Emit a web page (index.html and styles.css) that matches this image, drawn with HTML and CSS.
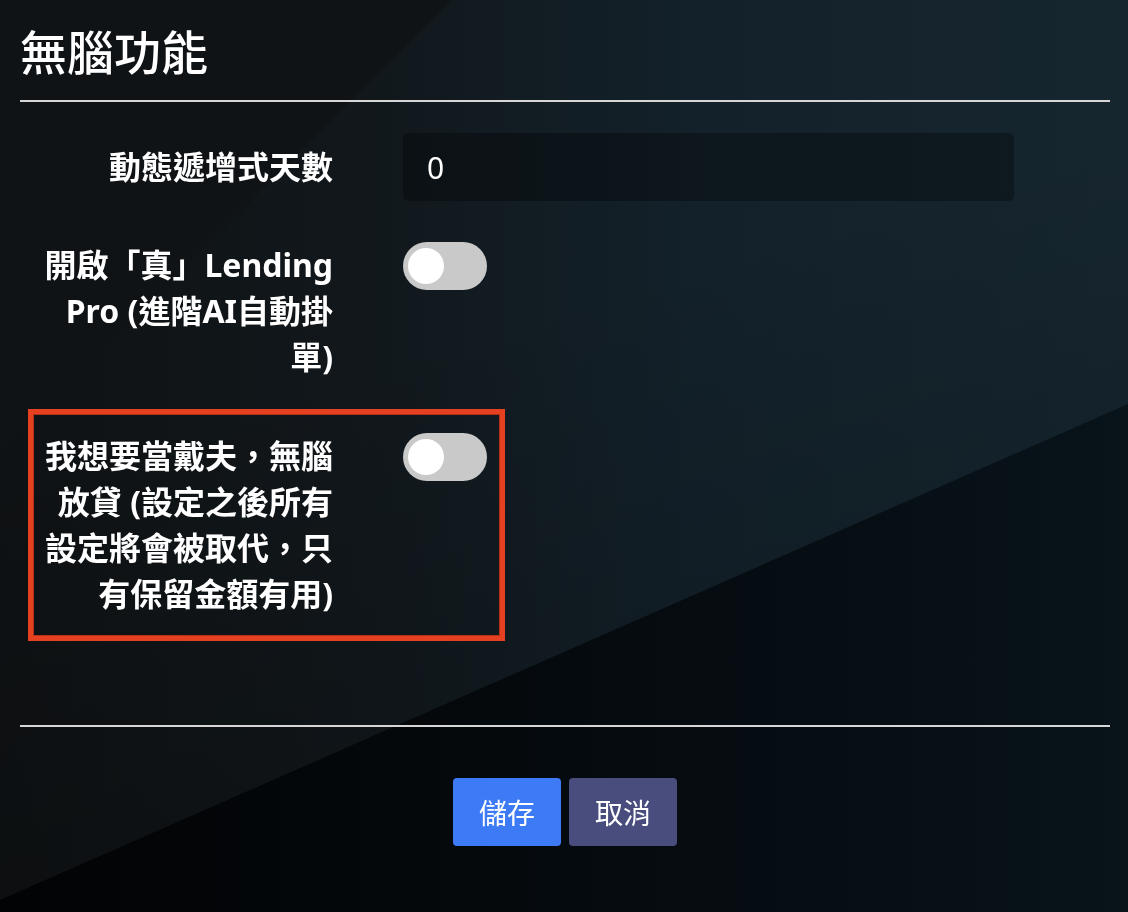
FILE: index.html
```html
<!DOCTYPE html>
<html lang="zh-Hant">
<head>
  <meta charset="UTF-8" />
  <meta name="viewport" content="width=device-width, initial-scale=1.0"/>
  <title>無腦功能</title>
  <link rel="stylesheet" href="styles.css">
</head>
<body>

<div class="panel">
  <h1 class="panel-title">無腦功能</h1>

  <form id="lazyForm">
    <div class="row row-center">
      <label class="row-label" for="days">動態遞增式天數</label>
      <input class="text-input" type="text" id="days" value="0" />
    </div>

    <div class="row row-pro">
      <div class="row-label">開啟「真」Lending Pro (進階AI自動掛單)</div>
      <label class="switch">
        <input type="checkbox" id="proMode" />
        <span class="slider"></span>
      </label>
    </div>

    <div class="row row-lazy">
      <div class="row-label">我想要當戴夫，無腦放貸 (設定之後所有設定將會被取代，只有保留金額有用)</div>
      <label class="switch">
        <input type="checkbox" id="lazyMode" />
        <span class="slider"></span>
      </label>
      <div class="mark"></div>
    </div>

    <div class="actions">
      <button type="submit" class="btn btn-save">儲存</button>
      <button type="button" class="btn btn-cancel">取消</button>
    </div>
  </form>
</div>

<script>
  // just keep the form on the page
  document.getElementById("lazyForm").addEventListener("submit", function (e) {
    e.preventDefault();
  });
</script>

</body>
</html>
```

FILE: styles.css
```css
html, body {
  height: 100%;
}

body {
  margin: 0;
  font-family: "Noto Sans", "Noto Sans CJK TC", sans-serif;
  color: #fff;
  background:
    linear-gradient(165deg, rgba(0,0,0,0) 35%, rgba(0,0,0,0.25) 100%),
    linear-gradient(90deg, #0f1214 0%, #11171b 30%, #13212a 62%, #16262f 100%);
  overflow: hidden;
}

/* background shapes */
body::before,
body::after {
  content: "";
  position: fixed;
  inset: 0;
  z-index: -1;
}

body::before {
  clip-path: polygon(0 0, 452px 0, 0 452px);
  background: linear-gradient(135deg, #101316 20%, #1a2228 100%);
}

body::after {
  clip-path: polygon(0 900px, 1128px 404px, 1128px 912px, 0 912px);
  background: linear-gradient(90deg, #020304 0%, #050a0e 50%, #08131a 100%);
}

.panel {
  padding: 0 18px 0 20px;
}

.panel-title {
  margin: 0;
  padding: 22px 0 18px 0;
  font-size: 47px;
  font-weight: 500;
  line-height: 60px;
  border-bottom: 2px solid #d6d6d6;
}

.row {
  display: grid;
  grid-template-columns: 296px 611px;
  column-gap: 70px;
  align-items: start;
  padding-left: 17px;
  position: relative;
}

.row-center {
  align-items: center;
  margin-top: 31px;
}

.row-pro {
  margin-top: 41px;
}

.row-lazy {
  margin-top: 53px;
}

.row-label {
  text-align: right;
  font-size: 32px;
  font-weight: 700;
  line-height: 46px;
}

.text-input {
  height: 68px;
  box-sizing: border-box;
  padding: 0 24px;
  border: none;
  border-radius: 5px;
  background: rgba(0, 0, 0, 0.3);
  color: #fff;
  font-family: "Noto Sans", sans-serif;
  font-size: 30px;
  outline: none;
}

.switch {
  position: relative;
  display: inline-block;
  width: 84px;
  height: 48px;
}

.switch input {
  display: none;
}

.slider {
  position: absolute;
  inset: 0;
  border-radius: 24px;
  background: #c9c9c9;
  cursor: pointer;
}

.slider::before {
  content: "";
  position: absolute;
  left: 5px;
  top: 6px;
  width: 36px;
  height: 36px;
  border-radius: 50%;
  background: #fff;
}

.switch input:checked + .slider {
  background: #3d7af5;
}

.switch input:checked + .slider::before {
  left: 43px;
}

/* red note box around the row */
.mark {
  position: absolute;
  left: 8px;
  top: -24px;
  width: 477px;
  height: 232px;
  box-sizing: border-box;
  border: 5px solid #e5401f;
  box-shadow: inset 0 0 0 1px #b3311a;
  pointer-events: none;
}

.actions {
  margin-top: 108px;
  padding-top: 51px;
  border-top: 2px solid #d6d6d6;
  display: flex;
  justify-content: center;
  gap: 8px;
}

.btn {
  width: 108px;
  height: 68px;
  border: none;
  border-radius: 4px;
  color: #fff;
  font-family: "Noto Sans CJK TC", sans-serif;
  font-size: 28px;
  cursor: pointer;
}

.btn-save {
  background: #3d7af5;
}

.btn-cancel {
  background: #484d7e;
}
```
